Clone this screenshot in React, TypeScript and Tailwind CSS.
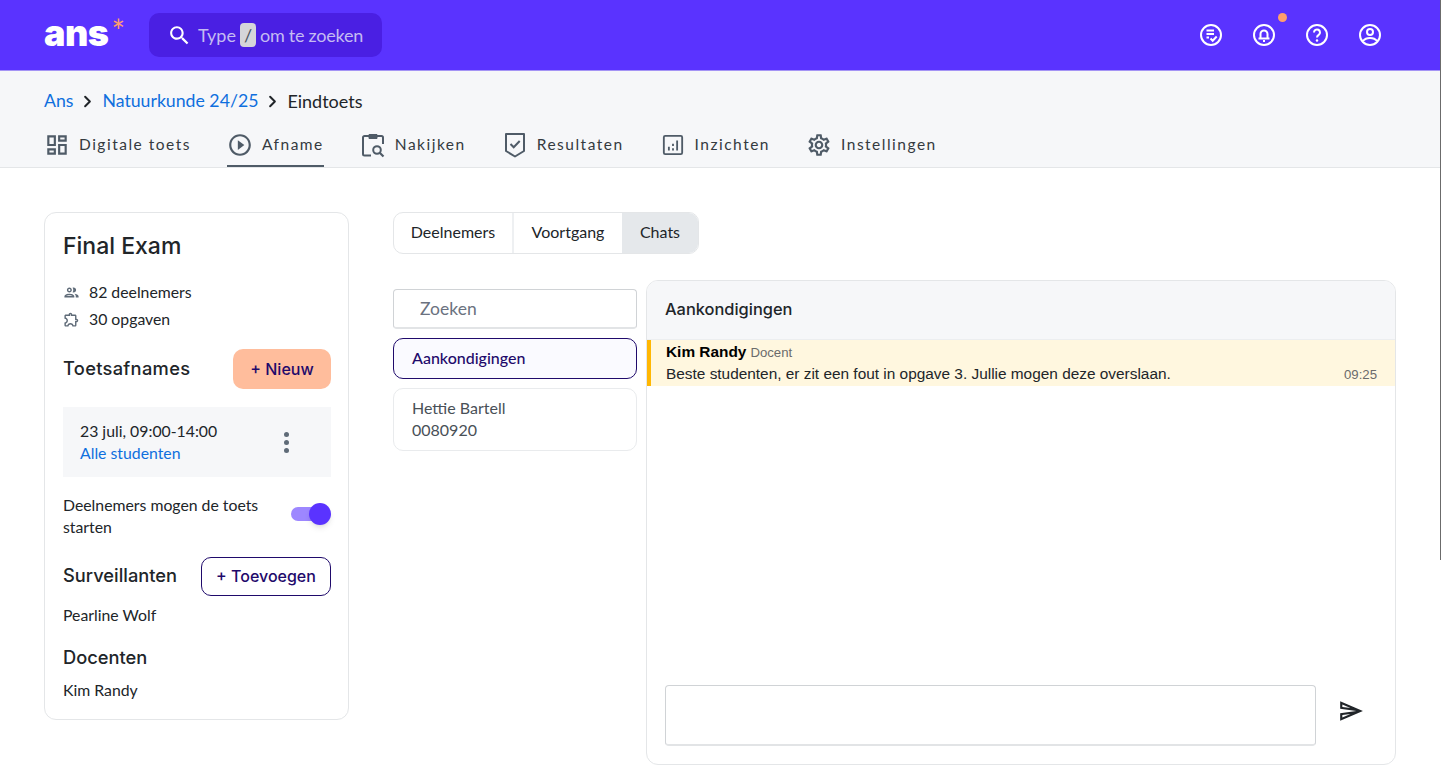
import type { ReactNode } from "react";
import { ChevronRight } from "lucide-react";

const nunito = "font-['Lato','Noto_Sans',sans-serif]";
const poppins = "font-['Inter','Noto_Sans',sans-serif]";

function MatIcon({ d, className }: { d: string; className?: string }) {
  return (
    <svg viewBox="0 0 24 24" fill="currentColor" className={className}>
      <path d={d} />
    </svg>
  );
}

const icons = {
  dashboard: "M19 5v2h-4V5h4M9 5v6H5V5h4m10 8v6h-4v-6h4M9 17v2H5v-2h4M21 3h-8v6h8V3zM11 3H3v10h8V3zm10 8h-8v10h8V11zm-10 4H3v6h8v-6z",
  play: "M10 16.5l6-4.5-6-4.5v9zM12 2C6.48 2 2 6.48 2 12s4.48 10 10 10 10-4.48 10-10S17.52 2 12 2zm0 18c-4.41 0-8-3.59-8-8s3.59-8 8-8 8 3.59 8 8-3.59 8-8 8z",
  search: "M15.5 14h-.79l-.28-.27C15.41 12.59 16 11.11 16 9.5 16 5.91 13.09 3 9.5 3S3 5.91 3 9.5 5.91 16 9.5 16c1.61 0 3.09-.59 4.23-1.57l.27.28v.79l5 4.99L20.49 19l-4.99-5zm-6 0C7.01 14 5 11.99 5 9.5S7.01 5 9.5 5 14 7.01 14 9.5 11.99 14 9.5 14z",
  send: "M4.01 6.03l7.51 3.22-7.52-1 .01-2.22m7.5 8.72L4 17.97v-2.22l7.51-1M2.01 3L2 10l15 2-15 2 .01 7L23 12 2.01 3z",
  settings:
    "M19.43 12.98c.04-.32.07-.64.07-.98 0-.34-.03-.66-.07-.98l2.11-1.65c.19-.15.24-.42.12-.64l-2-3.46c-.09-.16-.26-.25-.44-.25-.06 0-.12.01-.17.03l-2.49 1c-.52-.4-1.08-.73-1.69-.98l-.38-2.65C14.46 2.18 14.25 2 14 2h-4c-.25 0-.46.18-.49.42l-.38 2.65c-.61.25-1.17.59-1.69.98l-2.49-1c-.06-.02-.12-.03-.18-.03-.17 0-.34.09-.43.25l-2 3.46c-.13.22-.07.49.12.64l2.11 1.65c-.04.32-.07.65-.07.98 0 .33.03.66.07.98l-2.11 1.65c-.19.15-.24.42-.12.64l2 3.46c.09.16.26.25.44.25.06 0 .12-.01.17-.03l2.49-1c.52.4 1.08.73 1.69.98l.38 2.65c.03.24.24.42.49.42h4c.25 0 .46-.18.49-.42l.38-2.65c.61-.25 1.17-.59 1.69-.98l2.49 1c.06.02.12.03.18.03.17 0 .34-.09.43-.25l2-3.46c.12-.22.07-.49-.12-.64l-2.11-1.65zm-1.98-1.71c.04.31.05.52.05.73 0 .21-.02.43-.05.73l-.14 1.13.89.7 1.08.84-.7 1.21-1.27-.51-1.04-.42-.9.68c-.43.32-.84.56-1.25.73l-1.06.43-.16 1.13-.2 1.35h-1.4l-.19-1.35-.16-1.13-1.06-.43c-.43-.18-.83-.41-1.23-.71l-.91-.7-1.06.43-1.27.51-.7-1.21 1.08-.84.89-.7-.14-1.13c-.03-.31-.05-.54-.05-.74s.02-.43.05-.73l.14-1.13-.89-.7-1.08-.84.7-1.21 1.27.51 1.04.42.9-.68c.43-.32.84-.56 1.25-.73l1.06-.43.16-1.13.2-1.35h1.39l.19 1.35.16 1.13 1.06.43c.43.18.83.41 1.23.71l.91.7 1.06-.43 1.27-.51.7 1.21-1.07.85-.89.7.14 1.13zM12 8c-2.21 0-4 1.79-4 4s1.79 4 4 4 4-1.79 4-4-1.79-4-4-4zm0 6c-1.1 0-2-.9-2-2s.9-2 2-2 2 .9 2 2-.9 2-2 2z",
  people:
    "M9 13.75c-2.34 0-7 1.17-7 3.5V19h14v-1.75c0-2.33-4.66-3.5-7-3.5zM4.34 17c.84-.58 2.87-1.25 4.66-1.25s3.82.67 4.66 1.25H4.34zM9 12c1.93 0 3.5-1.57 3.5-3.5S10.93 5 9 5 5.5 6.57 5.5 8.5 7.07 12 9 12zm0-5c.83 0 1.5.67 1.5 1.5S9.83 10 9 10s-1.5-.67-1.5-1.5S8.17 7 9 7zm7.04 6.81c1.16.84 1.96 1.96 1.96 3.44V19h4v-1.75c0-2.02-3.5-3.17-5.96-3.44zM15 12c1.93 0 3.5-1.57 3.5-3.5S16.93 5 15 5c-.54 0-1.04.13-1.5.35.63.89 1 1.98 1 3.15s-.37 2.26-1 3.15c.46.22.96.35 1.5.35z",
  puzzle:
    "M10.5 4.5c.28 0 .5.22.5.5v2h6v6h2c.28 0 .5.22.5.5s-.22.5-.5.5h-2v6h-2.12c-.68-1.75-2.39-3-4.38-3s-3.7 1.25-4.38 3H4v-2.12c1.75-.68 3-2.39 3-4.38 0-1.99-1.24-3.7-2.99-4.38L4 7h6V5c0-.28.22-.5.5-.5m0-2C9.12 2.5 8 3.62 8 5H4c-1.1 0-1.99.9-1.99 2v3.8h.29c1.49 0 2.7 1.21 2.7 2.7s-1.21 2.7-2.7 2.7H2V20c0 1.1.9 2 2 2h3.8v-.3c0-1.49 1.21-2.7 2.7-2.7s2.7 1.21 2.7 2.7v.3H17c1.1 0 2-.9 2-2v-4c1.38 0 2.5-1.12 2.5-2.5S20.38 11 19 11V7c0-1.1-.9-2-2-2h-4c0-1.38-1.12-2.5-2.5-2.5z",
};

function ClipboardSearch({ className }: { className?: string }) {
  return (
    <svg viewBox="0 0 24 26" fill="none" stroke="currentColor" strokeWidth="2" className={className}>
      <path d="M8 4H3.500A1.500 1.500 0 0 0 2 5.500V22a1.500 1.500 0 0 0 1.500 1.500H10" />
      <path d="M16 4h4.500A1.500 1.500 0 0 1 22 5.500V12" />
      <path d="M8 2.500h8V6.500H8z" fill="currentColor" strokeWidth="1" />
      <circle cx="16" cy="18" r="3.800" />
      <path d="M18.700 20.700l3.800 3.800" strokeWidth="2.200" />
    </svg>
  );
}

function ShieldCheck({ className }: { className?: string }) {
  return (
    <svg viewBox="0 0 24 26" fill="none" stroke="currentColor" strokeWidth="2" className={className}>
      <path d="M3 2h18v17l-9 5.500L3 19z" strokeLinejoin="round" />
      <path d="M7.500 12l3.200 3.200 6-6.200" />
    </svg>
  );
}

function InsightsBox({ className }: { className?: string }) {
  return (
    <svg viewBox="0 0 24 24" fill="none" stroke="currentColor" className={className}>
      <rect x="2" y="2" width="20" height="20" rx="1.500" strokeWidth="2" />
      <path d="M7.500 14v4M12 15.500V18M12 10.500V13M16.500 7v11" strokeWidth="2" />
    </svg>
  );
}

function TopIcon({ children }: { children: ReactNode }) {
  return (
    <svg viewBox="0 0 24 24" fill="none" stroke="white" strokeWidth="2" className="w-6 h-6">
      <circle cx="12" cy="12" r="10" />
      {children}
    </svg>
  );
}

const tabs = [
  { label: "Digitale toets", icon: <MatIcon d={icons.dashboard} className="w-[26px] h-[26px]" /> },
  { label: "Afname", icon: <MatIcon d={icons.play} className="w-[26px] h-[26px]" />, active: true },
  { label: "Nakijken", icon: <ClipboardSearch className="w-[24px] h-[26px]" /> },
  { label: "Resultaten", icon: <ShieldCheck className="w-[24px] h-[26px]" /> },
  { label: "Inzichten", icon: <InsightsBox className="w-[22px] h-[22px]" /> },
  { label: "Instellingen", icon: <MatIcon d={icons.settings} className="w-[26px] h-[26px]" /> },
];

export default function App() {
  return (
    <div className={`relative h-[779px] overflow-hidden bg-white text-[#212529] ${nunito}`}>
      <header className="h-[71px] bg-[#5a33ff] border-b border-[#a594f5] flex items-center pl-11 pr-[59px]">
        <div className="flex items-start w-[105px] -mt-[5px]">
          <span className={`text-[36px] leading-none font-black tracking-[-0.5px] text-white ${poppins}`}>ans</span>
          <span className="text-[32px] leading-none font-normal text-[#ff9e6d] ml-[3px]">*</span>
        </div>
        <div className="w-[233px] h-11 rounded-[10px] bg-[#4a1fe3] flex items-center pl-[18px] text-[18px] text-[#c4bbf2]">
          <MatIcon d={icons.search} className="w-[25px] h-[25px] text-white mr-[6px]" />
          <span>Type</span>
          <span className="mx-[4px] w-4 h-[24px] rounded-[4px] bg-[#d5d5d9] text-[#4b5563] flex items-center justify-center">/</span>
          <span className="tracking-[-0.25px]">om te zoeken</span>
        </div>
        <div className="ml-auto flex items-center gap-[29px]">
          <TopIcon>
            <path d="M7.500 7.500h7.500M7.500 11h7.500M7.500 14.500h2.500" strokeWidth="2" />
            <path d="M11.500 15.500l2.200 2.200 4-4.200" strokeWidth="2" />
          </TopIcon>
          <div className="relative flex">
            <TopIcon>
              <path d="M8.500 15.500V11a3.500 3.500 0 0 1 7 0v4.500zM6.500 15.500h11M11 18h2" strokeWidth="2" />
            </TopIcon>
            <span className="absolute -top-[10px] -right-[11px] w-[9px] h-[9px] rounded-full bg-[#ff9e6d]" />
          </div>
          <TopIcon>
            <path d="M9 9.500a3 3 0 1 1 4.700 2.400c-1.100.8-1.700 1.300-1.700 2.600" />
            <circle cx="12" cy="17.500" r="1.200" fill="white" stroke="none" />
          </TopIcon>
          <TopIcon>
            <circle cx="12" cy="9" r="3" />
            <path d="M5 18c1.500-2 4.300-3 7-3s5.500 1 7 3" />
          </TopIcon>
        </div>
      </header>

      <div className="h-[97px] bg-[#f6f7f9] border-b border-[#e4e6e8] pl-11 flex flex-col">
        <nav className="flex items-center h-[24px] mt-[18px] text-[17.700px] leading-6">
          <a className="text-[#0f6fde]">Ans</a>
          <ChevronRight className="w-[19px] h-[19px] mx-[5px] text-[#212529]" strokeWidth={2.5} />
          <a className="text-[#0f6fde]">Natuurkunde 24/25</a>
          <ChevronRight className="w-[19px] h-[19px] mx-[5px] text-[#212529]" strokeWidth={2.5} />
          <span className="text-[#212529] text-[18px]">Eindtoets</span>
        </nav>
        <div className="flex mt-auto gap-9">
          {tabs.map((t) => (
            <div
              key={t.label}
              className={`h-[42px] flex items-center gap-[9px] border-b-2 text-[#4f5b67] ${t.active ? "border-[#4f5b67]" : "border-transparent"}`}
            >
              <span className="w-[26px] flex justify-center">{t.icon}</span>
              <span className="text-[15.500px] tracking-[1.500px] text-[#343a40]">{t.label}</span>
            </div>
          ))}
        </div>
      </div>

      <main className="flex items-start pl-11 pt-11 gap-11">
        <aside className="w-[305px] h-[508px] border border-[#e4e6e8] rounded-xl pl-[18px] pr-[17px] pt-[17px] text-[15.800px]">
          <h1 className={`text-[23px] leading-[32px] font-medium text-[#212529] ${poppins}`}>Final Exam</h1>
          <div className="mt-[19px] flex flex-col gap-[5px]">
            <div className="flex items-center h-[22px] gap-[9px]">
              <MatIcon d={icons.people} className="w-[17px] h-[17px] text-[#5f6b78]" />
              <span>82 deelnemers</span>
            </div>
            <div className="flex items-center h-[22px] gap-[9px]">
              <MatIcon d={icons.puzzle} className="w-[17px] h-[17px] text-[#5f6b78]" />
              <span>30 opgaven</span>
            </div>
          </div>
          <div className="mt-[19px] flex items-center justify-between">
            <h2 className={`text-[18.300px] tracking-[0.3px] font-medium ${poppins}`}>Toetsafnames</h2>
            <button className={`w-[98px] h-10 rounded-[10px] bg-[#ffbd9c] text-[#1f0a6b] text-[16px] font-medium ${poppins}`}>+ Nieuw</button>
          </div>
          <div className="mt-[18px] h-[70px] bg-[#f6f7f9] pl-[17px] pr-[42px] flex items-center justify-between">
            <div className="leading-[22px]">
              <div>23 juli, 09:00-14:00</div>
              <a className="text-[#0f6fde]">Alle studenten</a>
            </div>
            <div className="flex flex-col gap-[3px]">
              <span className="w-[5px] h-[5px] rounded-full bg-[#5f6b78]" />
              <span className="w-[5px] h-[5px] rounded-full bg-[#5f6b78]" />
              <span className="w-[5px] h-[5px] rounded-full bg-[#5f6b78]" />
            </div>
          </div>
          <div className="mt-[17px] flex items-start justify-between">
            <p className="w-[215px] leading-[22px]">Deelnemers mogen de toets starten</p>
            <div className="relative mt-[9px] w-10 h-[22px] flex items-center">
              <span className="w-[34px] h-[14px] rounded-full bg-[#9d87ff]" />
              <span className="absolute right-0 w-[22px] h-[22px] rounded-full bg-[#5a33ff] shadow-md" />
            </div>
          </div>
          <div className="mt-[19px] flex items-center justify-between">
            <h2 className={`text-[18.300px] pb-[1px] font-medium ${poppins}`}>Surveillanten</h2>
            <button className={`w-[130px] h-[39px] pb-[1px] rounded-[10px] border border-[#1f0a6b] text-[#1f0a6b] text-[16px] font-medium ${poppins}`}>+ Toevoegen</button>
          </div>
          <p className="mt-[8px] leading-[22px]">Pearline Wolf</p>
          <h2 className={`mt-[19px] text-[18.300px] leading-6 font-medium ${poppins}`}>Docenten</h2>
          <p className="mt-[10px] leading-[22px]">Kim Randy</p>
        </aside>

        <section className="w-[1003px]">
          <div className="inline-flex h-[42px] border border-[#e4e6e8] rounded-[10px] overflow-hidden text-[16px]">
            <div className="w-[120px] pb-[2px] flex items-center justify-center border-r-2 border-[#eef0f2]">Deelnemers</div>
            <div className="w-[108px] pb-[2px] flex items-center justify-center">Voortgang</div>
            <div className="w-[76px] pb-[2px] flex items-center justify-center bg-[#e5e8eb]">Chats</div>
          </div>
          <div className="mt-[26px] flex items-start gap-[9px]">
            <div className="w-[244px] pt-[9px] flex flex-col gap-[9px] text-[16px]">
              <input
                placeholder="Zoeken"
                className="h-10 w-full rounded-[4px] border border-[#d0d3d6] border-b-2 border-b-[#e2e4e6] pl-[26px] text-[17.500px] placeholder:text-[#6b7280] outline-none"
              />
              <div className="h-[41px] rounded-[10px] border border-[#1f0a6b] bg-[#fafaff] pl-[18px] pb-[2px] flex items-center text-[#1f0a6b] font-medium">Aankondigingen</div>
              <div className="h-[63px] rounded-[10px] border border-[#e9ebed] pl-[18px] pb-[2px] flex flex-col justify-center leading-[22px] text-[#495057]">
                <span>Hettie Bartell</span>
                <span>0080920</span>
              </div>
            </div>
            <div className="w-[750px] h-[485px] border border-[#e4e6e8] rounded-xl overflow-hidden flex flex-col">
              <div className={`h-[59px] bg-[#f6f7f9] border-b border-[#eceef0] pl-[18px] pb-[2px] flex items-center text-[16.400px] font-medium text-[#212529] ${poppins}`}>Aankondigingen</div>
              <div className="h-[46px] bg-[#fff7df] border-l-4 border-[#ffb703] pl-[15px] pr-[18px] flex justify-between font-['Liberation_Sans',Arial,sans-serif]">
                <div>
                  <div className="leading-[17px] mt-[3px]">
                    <span className="text-[15.400px] font-bold text-black">Kim Randy</span>
                    <span className="ml-[4px] text-[13.200px] text-[#6b6b6b]">Docent</span>
                  </div>
                  <p className="text-[15.400px] leading-[20px] mt-[3px] text-[#212529]">Beste studenten, er zit een fout in opgave 3. Jullie mogen deze overslaan.</p>
                </div>
                <span className="self-end mb-[3px] text-[13.200px] leading-4 text-[#6b6b6b]">09:25</span>
              </div>
              <div className="mt-auto pl-[18px] pb-[18px] flex items-center">
                <textarea className="w-[651px] h-[61px] rounded-[4px] border border-[#d0d3d6] border-b-2 border-b-[#e2e4e6] resize-none outline-none" />
                <MatIcon d={icons.send} className="w-[26px] h-[26px] ml-[22px] -mt-[9px] text-[#212529]" />
              </div>
            </div>
          </div>
        </section>
      </main>

      <span className="absolute top-0 right-0 w-px h-[560px] bg-[#6b6b6b]" />
    </div>
  );
}
